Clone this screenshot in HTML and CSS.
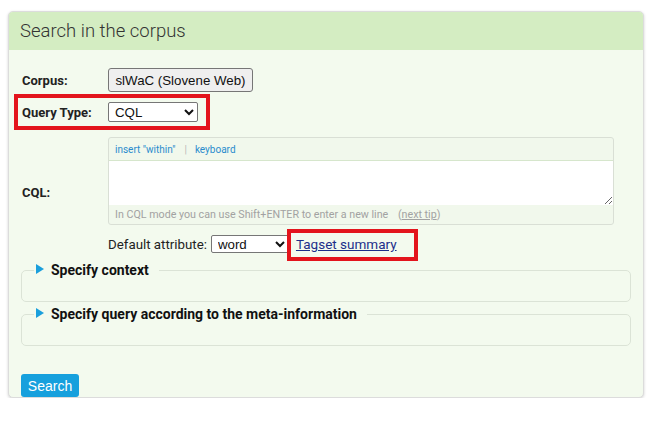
FILE: index.html
```html
<!DOCTYPE html>
<html>
<head>
<meta charset="utf-8">
<link rel="stylesheet" href="styles.css">
</head>
<body>
<div class="card">
  <div class="card-head">Search in the corpus</div>
  <div class="card-body">
    <div class="row row-corpus">
      <label class="lbl">Corpus:</label>
      <button class="btn-corpus">slWaC (Slovene Web)</button>
    </div>
    <div class="row row-qtype">
      <label class="lbl">Query Type:</label>
      <select class="sel sel-q"><option>CQL</option></select>
    </div>
    <div class="row row-cql">
      <label class="lbl lbl-cql">CQL:</label>
      <div class="widget">
        <div class="toolbar"><a>insert "within"</a><span class="sep">|</span><a>keyboard</a></div>
        <textarea class="ta"></textarea>
        <div class="hint">In CQL mode you can use Shift+ENTER to enter a new line <span class="tip">(<u>next tip</u>)</span></div>
      </div>
    </div>
    <div class="row row-attr">
      <span class="attr-text">Default attribute:</span>
      <select class="sel sel-w"><option>word</option></select>
      <a class="tagset" href="#">Tagset summary</a>
    </div>
    <fieldset class="fs fs1">
      <legend><span class="tri"></span>Specify context</legend>
      <div class="fs-in"></div>
    </fieldset>
    <fieldset class="fs fs2">
      <legend><span class="tri"></span>Specify query according to the meta-information</legend>
      <div class="fs-in"></div>
    </fieldset>
    <button class="btn-search">Search</button>
  </div>
  <div class="mark mark-q"></div>
  <div class="mark mark-t"></div>
</div>
</body>
</html>
```
FILE: styles.css
```css
* { box-sizing: border-box; }
html, body { margin: 0; padding: 0; background: #fff; }
body { font-family: Roboto, "Liberation Sans", Arial, sans-serif; color: #222; }

.card {
  position: relative;
  margin: 11px 0 0 8px;
  width: 636px;
  height: 387px;
  border: 1px solid #dcdcdc;
  border-radius: 5px;
  background: #f3faee;
  box-shadow: 0 1px 3px rgba(0,0,0,0.18);
  overflow: hidden;
}
.card-head {
  height: 38px;
  background: #d4edc2;
  font-size: 18.5px;
  font-weight: 300;
  color: #333;
  padding: 7px 0 0 11px;
  line-height: 24px;
}
.card-body {
  padding: 18px 12px 0 12px;
}
.row { display: flex; align-items: center; }
.lbl {
  width: 87px;
  padding-left: 1px;
  font-size: 13px;
  font-weight: 700;
  color: #222;
  flex-shrink: 0;
}
.row-corpus { height: 24px; margin-bottom: 10px; }
.btn-corpus {
  height: 24px;
  width: 145px;
  padding: 0;
  font-family: "Liberation Sans", Arial, sans-serif;
  font-size: 13.3px;
  color: #111;
  background: #efefef;
  border: 1px solid #767676;
  border-radius: 3px;
}
.row-qtype { height: 20px; margin-bottom: 15px; }
.sel {
  font-family: "Liberation Sans", Arial, sans-serif;
  font-size: 13.3px;
  color: #111;
  background: #fff;
  border: 1px solid #767676;
  border-radius: 2px;
  padding: 0 2px;
}
.sel-q { width: 90px; height: 20px; }

.row-cql { align-items: flex-start; margin-bottom: 10px; }
.lbl-cql { padding-top: 48px; }
.widget {
  width: 506px;
  height: 88px;
  border: 1px solid #d9dfd5;
  border-radius: 3px;
  background: #f1f8ec;
  display: flex;
  flex-direction: column;
}
.toolbar {
  height: 22px;
  padding: 6px 0 0 6px;
  font-size: 10px;
  line-height: 12px;
  color: #2a8ccc;
}
.toolbar a { color: #2a8ccc; }
.sep { color: #b8b8b8; margin: 0 8px 0 9px; }
.ta {
  display: block;
  width: 100%;
  height: 45px;
  margin: 0;
  border: 0;
  border-top: 1px solid #d6e6cc;
  background: #fff;
  resize: vertical;
  outline: none;
}
.hint {
  flex: 1;
  padding: 3px 0 0 6px;
  font-size: 10.7px;
  line-height: 14px;
  color: #a2a2a2;
}
.tip { margin-left: 7px; }

.row-attr { height: 18px; padding-left: 87px; margin-bottom: 9px; }
.attr-text { font-size: 13.3px; color: #222; margin-right: 4px; }
.sel-w { width: 78px; height: 18px; }
.tagset {
  margin-left: 7px;
  font-size: 13.5px;
  color: #1c2f8a;
  text-decoration: underline;
}

.fs {
  margin: 0;
  width: 610px;
  padding: 0 0 0 12px;
  border: 1px solid #dbe3d6;
  border-radius: 5px;
  min-inline-size: 0;
}
.fs legend {
  padding: 0 10px 0 2px;
  font-size: 14px;
  font-weight: 700;
  line-height: 16px;
  color: #111;
  display: flex;
  align-items: center;
}
.tri {
  display: inline-block;
  width: 0; height: 0;
  border-left: 8px solid #1a9fdc;
  border-top: 5px solid transparent;
  border-bottom: 5px solid transparent;
  margin-right: 7px;
  margin-top: -3px;
}
.fs-in { height: 23px; }
.fs1 { margin-bottom: 4px; }
.fs2 { margin-bottom: 28px; }

.btn-search {
  display: block;
  width: 58px;
  height: 23px;
  padding: 0;
  border: 0;
  border-radius: 3px;
  background: #16a0dd;
  color: #fff;
  font-family: "Liberation Sans", Arial, sans-serif;
  font-size: 14px;
}

.mark {
  position: absolute;
  border: 4px solid #e3141c;
  pointer-events: none;
}
.mark-q { left: 5px; top: 82px; width: 196px; height: 36px; }
.mark-t { left: 278px; top: 217px; width: 131px; height: 32px; }
```
